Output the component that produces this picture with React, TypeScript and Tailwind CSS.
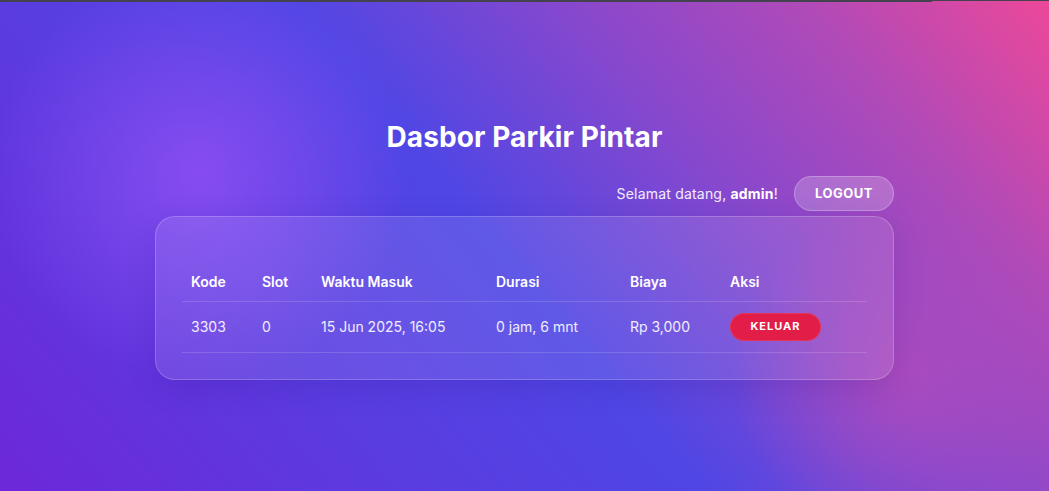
export default function App() {
  const rows = [
    { kode: '3303', slot: '0', masuk: '15 Jun 2025, 16:05', durasi: '0 jam, 6 mnt', biaya: 'Rp 3,000' },
  ]

  return (
    <div className="min-h-[491px] w-full bg-[radial-gradient(circle_at_19%_35%,rgba(146,80,245,0.8)_0%,rgba(146,80,245,0)_210px),radial-gradient(circle_at_86%_76%,rgba(180,76,186,0.75)_0%,rgba(180,76,186,0)_170px),linear-gradient(50deg,#6d28d9_0%,#5a3ce0_28%,#4f46e5_48%,#8a48cc_68%,#b04ab8_83%,#ec4899_100%)] font-['Inter',sans-serif] text-white">
      <div className="flex h-[2px]">
        <div className="h-[2px] w-[932px] bg-[#45424f]" />
        <div className="h-px flex-1 bg-[#45424f]" />
      </div>

      <div className="mx-auto w-[739px] pt-[117px]">
        <h1 className="text-center text-[28px] leading-9 font-bold tracking-[0.1px]">Dasbor Parkir Pintar</h1>

        <div className="mt-[21px] flex items-center justify-end gap-4">
          <p className="text-sm tracking-[0.2px] text-white/90">
            Selamat datang, <span className="font-bold text-white">admin</span>!
          </p>
          <button className="h-[35px] w-[100px] rounded-full border border-white/25 bg-white/20 text-[13px] font-bold tracking-[0.5px] text-white">
            LOGOUT
          </button>
        </div>

        <div className="mt-[5px] rounded-[20px] border border-white/20 bg-white/10 px-[26px] pt-[46px] pb-[26px] shadow-[0_8px_30px_rgba(40,10,120,0.15)]">
          <table className="w-full border-collapse text-left text-sm">
            <thead>
              <tr className="border-b border-white/15">
                <th className="w-[71px] px-[9px] py-[9px] font-semibold">Kode</th>
                <th className="w-[59px] px-[9px] py-[9px] font-semibold">Slot</th>
                <th className="w-[175px] px-[9px] py-[9px] font-semibold">Waktu Masuk</th>
                <th className="w-[134px] px-[9px] py-[9px] font-semibold">Durasi</th>
                <th className="w-[100px] px-[9px] py-[9px] font-semibold">Biaya</th>
                <th className="px-[9px] py-[9px] font-semibold">Aksi</th>
              </tr>
            </thead>
            <tbody>
              {rows.map((r) => (
                <tr key={r.kode} className="border-b border-white/15 text-white/90">
                  <td className="px-[9px] py-[11px]">{r.kode}</td>
                  <td className="px-[9px] py-[11px]">{r.slot}</td>
                  <td className="px-[9px] py-[11px]">{r.masuk}</td>
                  <td className="px-[9px] py-[11px]">{r.durasi}</td>
                  <td className="px-[9px] py-[11px]">{r.biaya}</td>
                  <td className="px-[9px] py-[11px]">
                    <button className="h-[28px] w-[91px] rounded-full border border-white/10 bg-[#e11d48] text-[11px] font-bold tracking-[1px] text-white">
                      KELUAR
                    </button>
                  </td>
                </tr>
              ))}
            </tbody>
          </table>
        </div>
      </div>
    </div>
  )
}
